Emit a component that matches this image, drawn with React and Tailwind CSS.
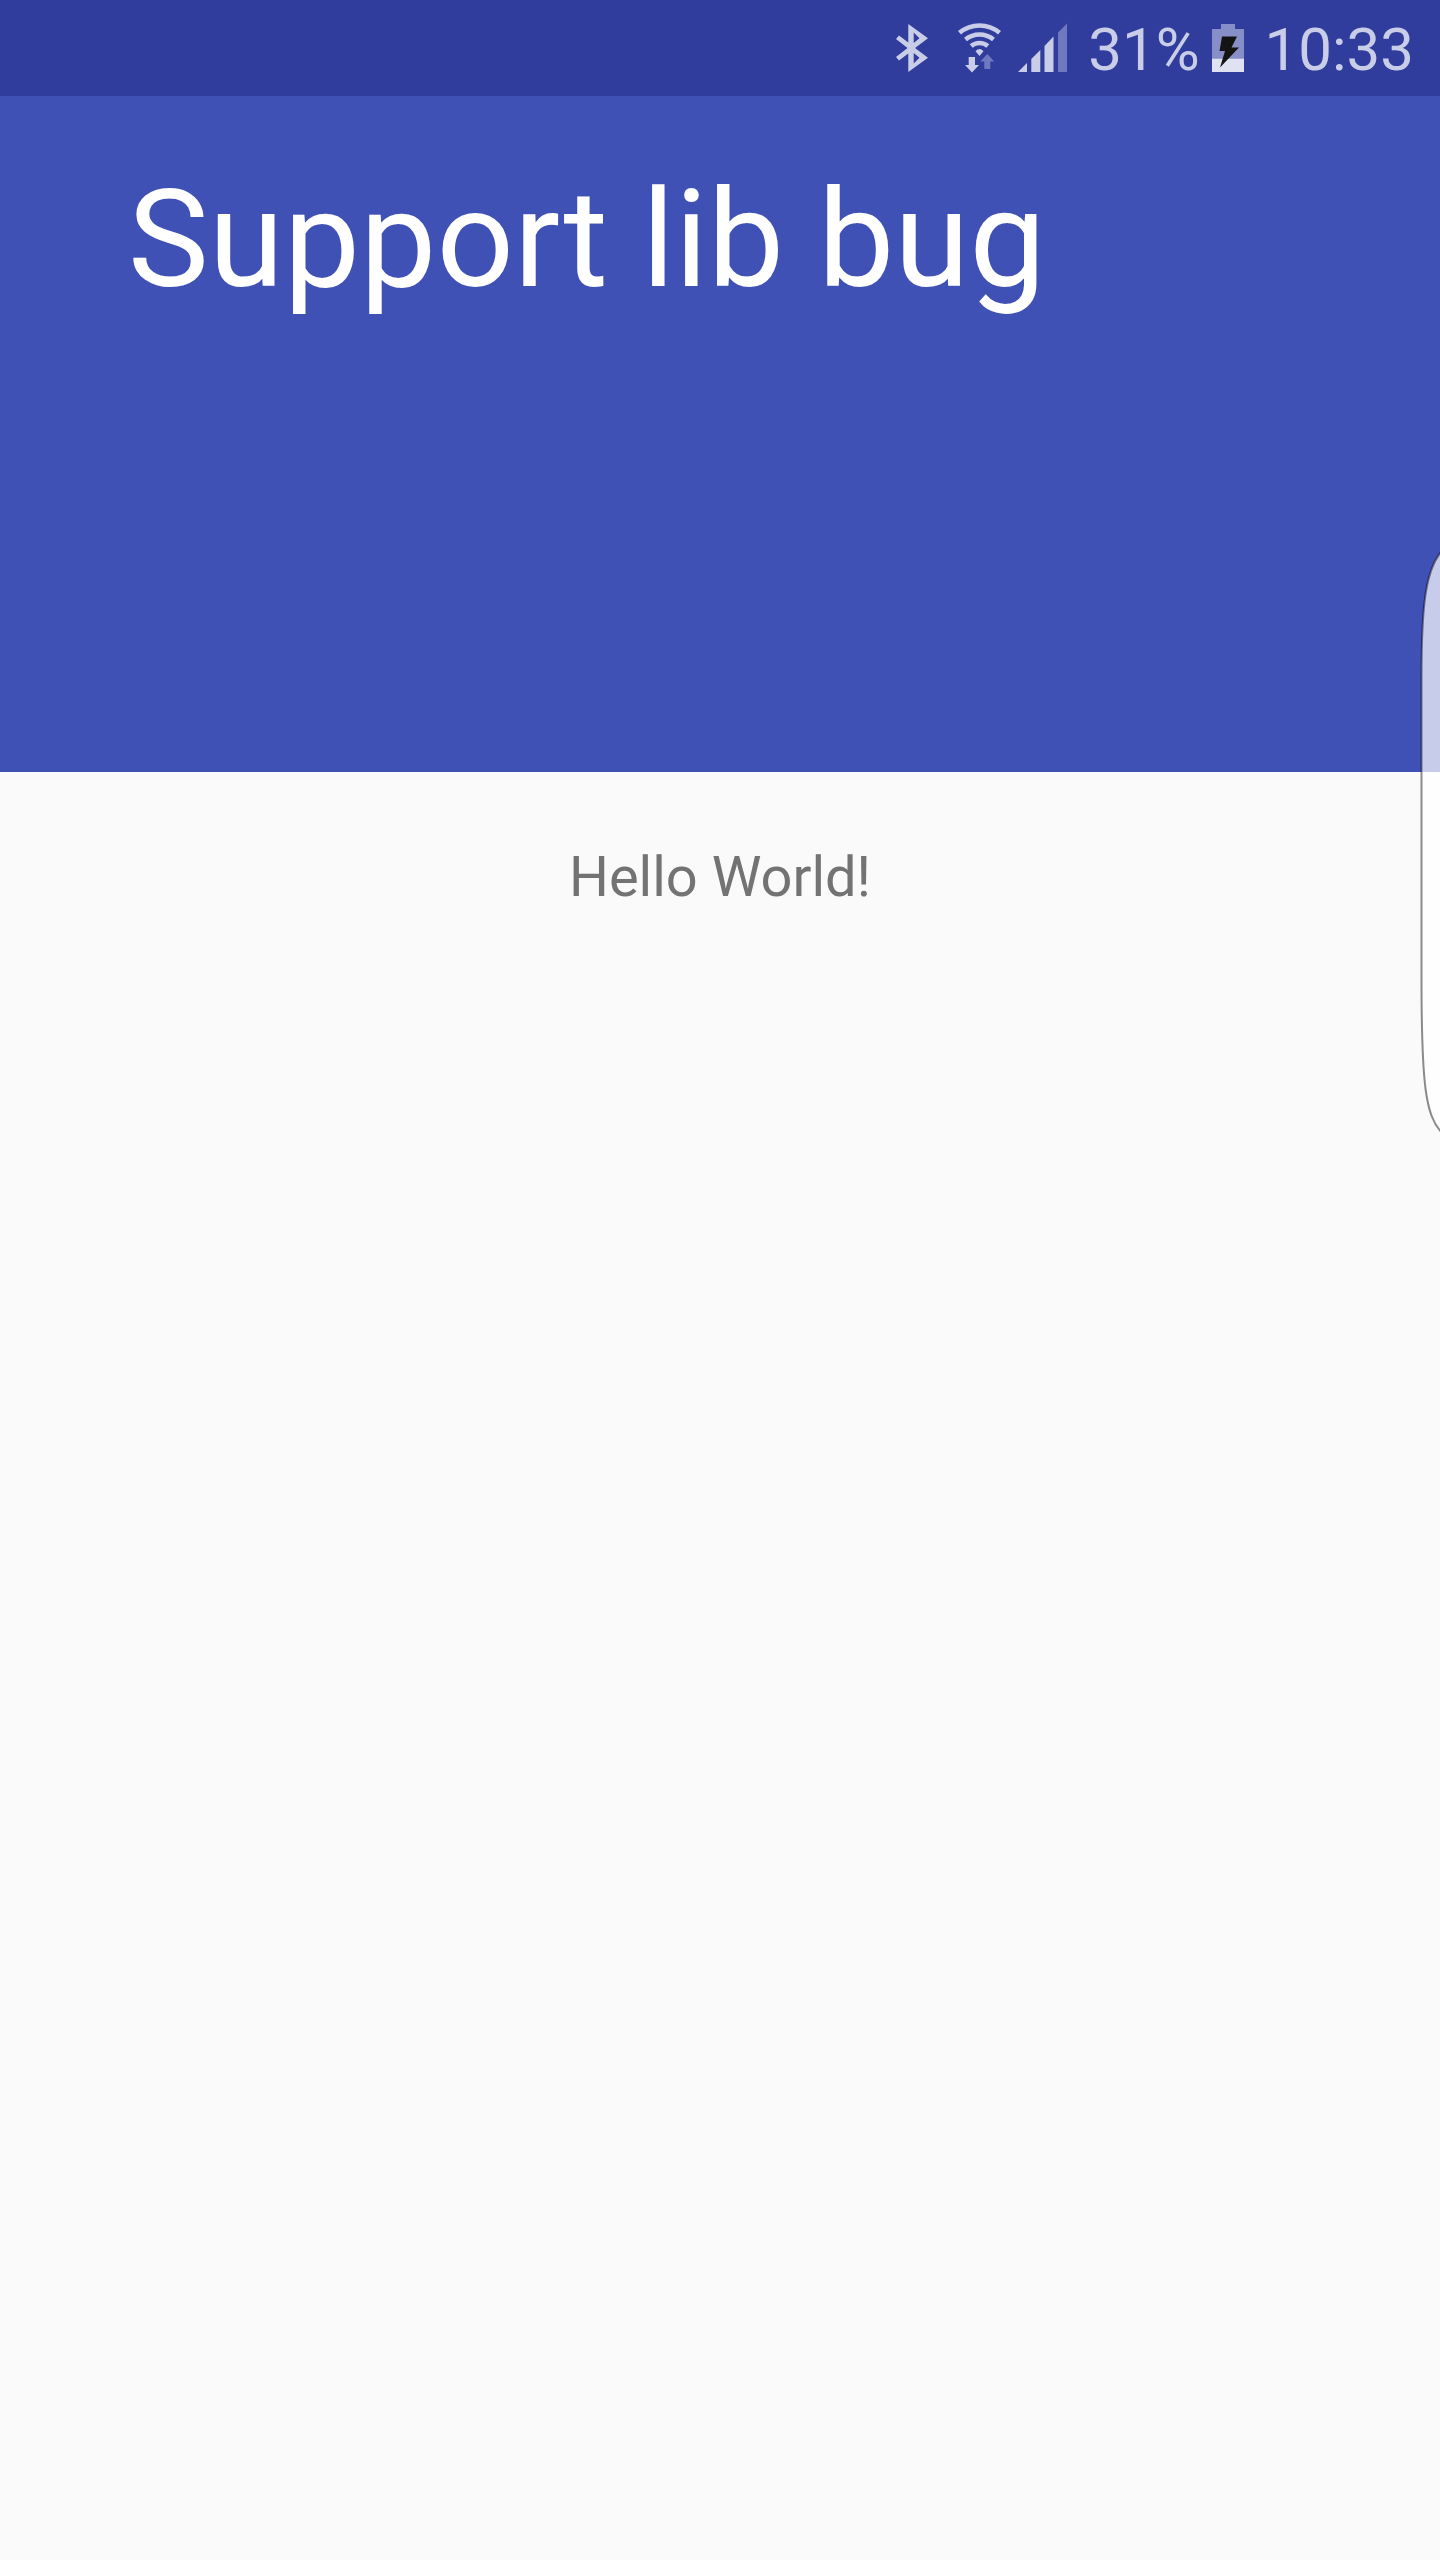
function BluetoothIcon() {
  return (
    <svg className="h-12 w-8 shrink-0 overflow-visible" viewBox="0 0 32 48" aria-label="Bluetooth" role="img">
      <path
        d="M12.300 0 32 14.300 19 24 32 33.700 12.300 48V29.500L3 36.500 0 33 11.500 24 0 15 3 11.500 12.300 18.500ZM17.700 8.500V19L23.500 14.300ZM17.700 29V39.500L23.500 33.700Z"
        fill="#c9cde7"
        fillRule="evenodd"
      />
    </svg>
  );
}

function WifiIcon() {
  return (
    <svg className="h-12 w-11 shrink-0 overflow-visible" viewBox="0 0 44 48" fill="none" aria-label="Wi-Fi" role="img">
      <g stroke="#c9cde7" strokeWidth="4.6">
        <path d="M1.500 8.800A31 31 0 0 1 41.500 8.800" />
        <path d="M7.500 15.500A22 22 0 0 1 35.500 15.500" />
        <path d="M13.200 22A13 13 0 0 1 29.800 22" />
      </g>
      <path d="M17.500 27.200Q21.500 23 25.500 27.200L21.500 32Z" fill="#c9cde7" />
      <path d="M10.700 33h6.300v8h4l-7 7.500-7-7.500h3.700z" fill="#c9cde7" />
      <path d="M29.300 30l7 7.500h-4V45h-6v-7.500h-4z" fill="#6f79bf" />
    </svg>
  );
}

function SignalIcon() {
  return (
    <svg className="h-12 w-[50px] shrink-0 overflow-visible" viewBox="0 0 50 48" aria-label="Mobile signal" role="img">
      <path d="M0 48 9 39V48Z" fill="#c9cde7" />
      <path d="M13.300 48V35L22.300 26V48Z" fill="#c9cde7" />
      <path d="M26.500 48V22L35.500 12.500V48Z" fill="#c9cde7" />
      <path d="M40 48V8.500L49 -.5V48Z" fill="#6f79bf" />
    </svg>
  );
}

function BatteryIcon() {
  return (
    <svg className="h-12 w-8 shrink-0" viewBox="0 0 32 48" aria-label="Battery charging" role="img">
      <path d="M9 0H23V5H32V34.500H0V5H9Z" fill="#868fc8" />
      <path d="M0 34.500H32V48H0Z" fill="#dfe2f1" />
      <path d="M10 12.500H25L19.500 23.500H27L8 43.500 13 27H7.500Z" fill="#141414" />
    </svg>
  );
}

function StatusBar() {
  return (
    <div className="flex h-24 items-center justify-end bg-[#303d9d] pr-[26px] text-[60px] leading-[72px] text-[#c9cde7]">
      <BluetoothIcon />
      <div className="ml-[30px] flex items-center gap-4">
        <WifiIcon />
        <SignalIcon />
      </div>
      <span className="ml-5 pt-[3px]">31%</span>
      <div className="ml-3 flex items-center gap-[21px]">
        <BatteryIcon />
        <time className="pt-[3px]">10:33</time>
      </div>
    </div>
  );
}

function EdgeHandle() {
  return (
    <svg
      className="absolute top-[548px] right-0 h-[586px] w-5"
      viewBox="0 0 20 586"
      fill="none"
      aria-hidden="true"
    >
      <path
        d="M21 4C6 22 1.500 55 1.500 130V430C1.500 540 6 566 21 584Z"
        fill="white"
        fillOpacity="0.71"
      />
      <path
        d="M21 4C6 22 1.500 55 1.500 130V430C1.500 540 6 566 21 584"
        stroke="black"
        strokeOpacity="0.45"
        strokeWidth="2"
      />
    </svg>
  );
}

export default function App() {
  return (
    <div className="relative min-h-screen overflow-hidden bg-[#fafafa] font-['Roboto',sans-serif]">
      <StatusBar />
      <header className="h-[676px] bg-[#3f51b5] px-32 pt-16">
        <h1 className="text-[136px] leading-[160px] text-white">Support lib bug</h1>
      </header>
      <main className="px-16 pt-[72px] text-center">
        <p className="text-[56px] leading-[66px] text-[#737373]">Hello World!</p>
      </main>
      <EdgeHandle />
    </div>
  );
}
